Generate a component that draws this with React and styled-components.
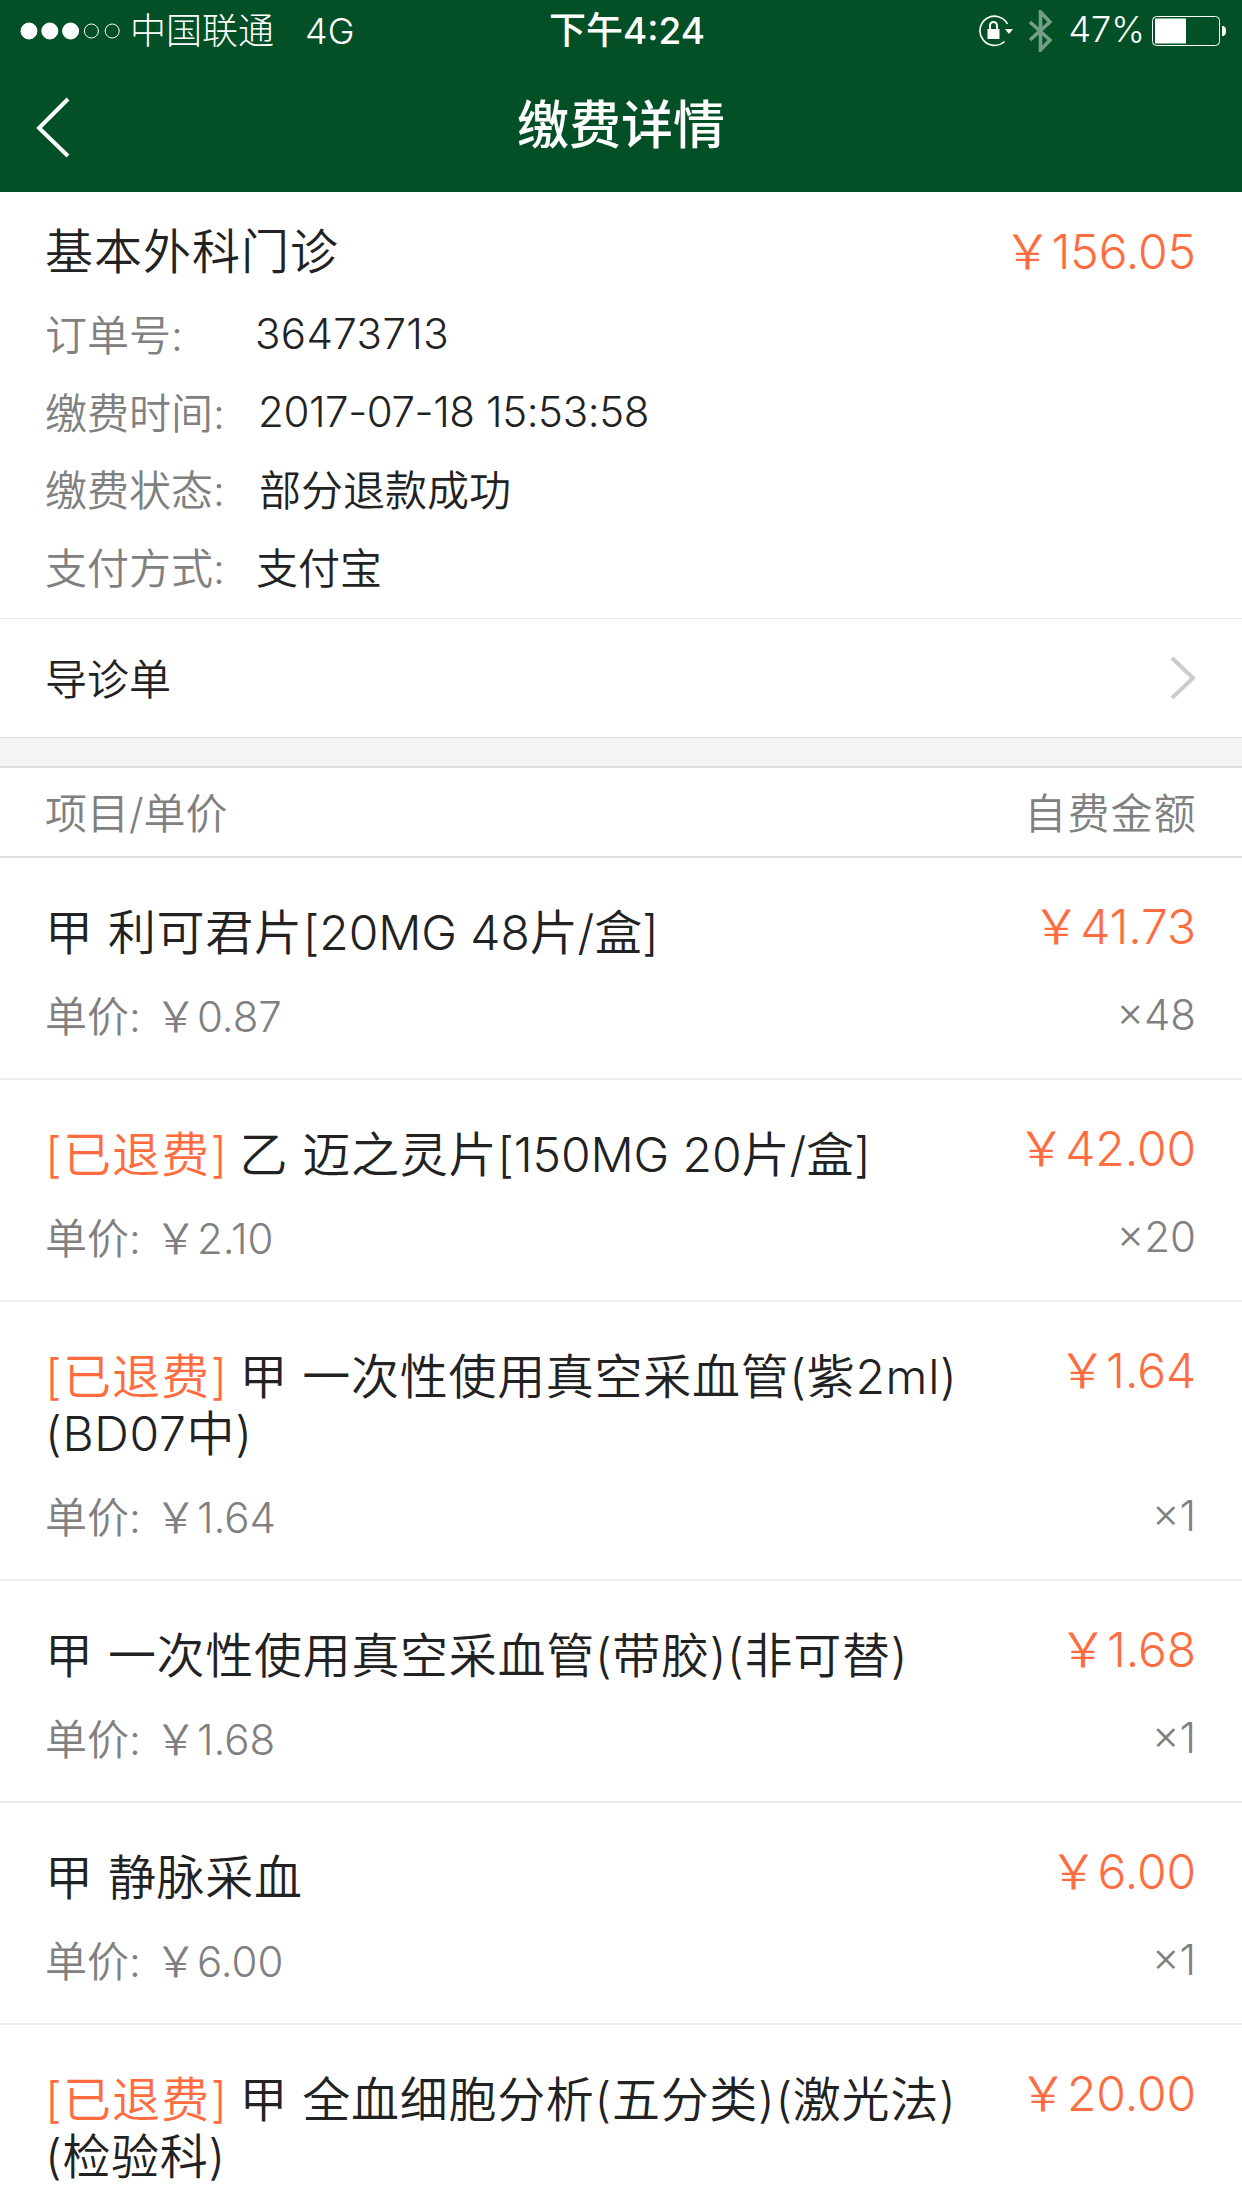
import React from 'react';
import styled, { createGlobalStyle } from 'styled-components';

const Global = createGlobalStyle`
  *, *::before, *::after { box-sizing: border-box; }
  html, body { margin: 0; padding: 0; background: #fff; }
  body { font-family: Inter, "Noto Sans CJK SC", sans-serif; }
  #root { width: 1242px; height: 2208px; overflow: hidden; }
`;
const Page = styled.div`width: 1242px; height: 2208px; overflow: hidden; background: #fff;`;
const Header = styled.header`background: #034f26; height: 192px; color: #fff; display: flex; flex-direction: column;`;
const Status = styled.div`height: 62px; display: grid; grid-template-columns: 1fr auto 1fr; align-items: center; padding: 0 16px 0 20px; font-size: 36px; font-weight: 300;`;
const StatusLeft = styled.div`display: flex; align-items: center; gap: 8px;`;
const Carrier = styled.span`font-weight: 300; white-space: pre; margin-bottom: 6px;`;
const Network = styled.span`margin-left: 31px;`;
const Clock = styled.div`font-size: 37px; font-weight: 500; margin: 0 0 6px 8px;`;
const StatusRight = styled.div`display: flex; align-items: center; justify-content: flex-end; gap: 16px;`;
const BatteryGroup = styled.div`display: flex; align-items: center; gap: 7px;`;
const Percent = styled.span`margin-bottom: 4px;`;
const Nav = styled.div`flex: 1; position: relative; display: flex; align-items: center; justify-content: center; padding-bottom: 2px;`;
const NavTitle = styled.h1`margin: 0; font-size: 52px; font-weight: 500; line-height: 1;`;
const Back = styled.svg`position: absolute; left: 35px; top: 33px;`;

const Summary = styled.section`padding: 14px 46px 0 45px; height: 426px;`;
const SummaryTop = styled.div`display: flex; justify-content: space-between; align-items: center; height: 84px; margin-bottom: 4px;`;
const Title = styled.div`font-size: 48px; font-weight: 350; color: #222; letter-spacing: 1px;`;
const Amount = styled.div`font-size: 48px; font-weight: 350; color: #ff6c40; white-space: nowrap; letter-spacing: -.1px;`;
const Info = styled.div`display: flex; align-items: center; height: 77.5px; font-size: 42px; font-weight: 350;`;
const InfoLabel = styled.span`color: #808080; width: ${p => p.$w}px; flex: none;`;
const InfoValue = styled.span`color: #222; letter-spacing: ${p => p.$ls || 0}px; margin-top: ${p => p.$top || 0}px;`;

const LinkRow = styled.div`height: 120px; border-top: 1px solid #e6e6e6; border-bottom: 1px solid #ddd; padding: 0 46px 4px 45px; display: flex; align-items: center; justify-content: space-between; font-size: 42px; font-weight: 350; color: #222;`;
const LinkArrow = styled.svg`margin-top: 4px;`;
const Gap = styled.div`height: 28px; background: #f4f4f4;`;
const TableHead = styled.div`height: 92px; border-top: 2px solid #dedede; border-bottom: 2px solid #dedede; padding: 0 46px 4px 45px; display: flex; align-items: center; justify-content: space-between; font-size: 42px; font-weight: 350; color: #808080;`;
const HeadRight = styled.span`letter-spacing: 1.2px; margin-right: -1px;`;

const Row = styled.div`border-bottom: 2px solid #eee; padding: 46px 46px 0 45px; display: flex; flex-direction: column; height: ${p => p.$two ? 279 : 222.1}px;`;
const RowTop = styled.div`display: flex; justify-content: space-between; gap: 40px;`;
const Name = styled.div`font-size: 48px; font-weight: 350; color: #222; line-height: 57px; flex: 1; letter-spacing: .7px;`;
const Refund = styled.span`color: #ff6c40; letter-spacing: 1.2px; margin-right: 11px;`;
const Spec = styled.span`letter-spacing: -.1px;`;
const RowAmount = styled(Amount)`line-height: 57px; margin-top: -6px;`;
const RowBottom = styled.div`display: flex; justify-content: space-between; align-items: center; margin-top: 27px; font-size: 42px; font-weight: 350; color: #808080; line-height: 57px;`;
const UnitLabel = styled.span`margin-right: 14px;`;
const Qty = styled.span`margin-top: -4px;`;

const items = [
  { name: '甲 利可君片', spec: '[20MG 48片/盒]', amount: '41.73', unit: '0.87', qty: 48 },
  { refund: true, name: '乙 迈之灵片', spec: '[150MG 20片/盒]', amount: '42.00', unit: '2.10', qty: 20 },
  { refund: true, two: true, name: '甲 一次性使用真空采血管(紫2ml)(BD07中)', amount: '1.64', unit: '1.64', qty: 1 },
  { name: '甲 一次性使用真空采血管(带胶)(非可替)', amount: '1.68', unit: '1.68', qty: 1 },
  { name: '甲 静脉采血', amount: '6.00', unit: '6.00', qty: 1 },
  { refund: true, two: true, name: '甲 全血细胞分析(五分类)(激光法)(检验科)', amount: '20.00', unit: '20.00', qty: 1 },
];

const Dots = () => (
  <svg width="102" height="20" viewBox="0 0 102 20">
    {[0, 1, 2, 3, 4].map(i => (
      <circle key={i} cx={9 + i * 20.8} cy="10" r={i < 3 ? 8 : 7} fill={i < 3 ? '#fff' : 'none'} stroke="#fff" strokeWidth="1" />
    ))}
  </svg>
);
const LockIcon = () => (
  <svg width="34" height="32" viewBox="0 0 34 32" fill="none">
    <path d="M25.5 26.5A14.6 14.6 0 1 1 28.5 9" stroke="#fff" strokeWidth="1.6" />
    <path d="M26 14h8l-4 5z" fill="#fff" />
    <rect x="8.5" y="14" width="12" height="10" fill="#fff" />
    <path d="M11 14v-3.5a3.5 3.5 0 0 1 7 0V14" stroke="#fff" strokeWidth="2" />
  </svg>
);
const Bluetooth = () => (
  <svg width="23" height="42" viewBox="0 0 23 42" fill="none">
    <path d="M1 12 21 30 11.5 40V2L21 12 1 30" stroke="#fff" strokeOpacity=".45" strokeWidth="3.6" />
  </svg>
);
const Battery = () => (
  <svg width="74" height="30" viewBox="0 0 74 30">
    <rect x=".5" y=".5" width="67" height="29" rx="4" fill="none" stroke="#fff" />
    <rect x="3" y="2.5" width="31" height="25" fill="#fff" />
    <path d="M70 10c3 0 4 2 4 5s-1 5-4 5z" fill="#fff" />
  </svg>
);

export default function App() {
  return (
    <Page>
      <Global />
      <Header>
        <Status>
          <StatusLeft>
            <Dots />
            <Carrier>中国联通<Network>4G</Network></Carrier>
          </StatusLeft>
          <Clock>下午4:24</Clock>
          <StatusRight>
            <LockIcon />
            <Bluetooth />
            <BatteryGroup>
              <Percent>47%</Percent>
              <Battery />
            </BatteryGroup>
          </StatusRight>
        </Status>
        <Nav>
          <Back width="36" height="64" viewBox="0 0 36 64" fill="none">
            <path d="M33 4 4 33l29 28" stroke="#fff" strokeWidth="4" />
          </Back>
          <NavTitle>缴费详情</NavTitle>
        </Nav>
      </Header>
      <Summary>
        <SummaryTop>
          <Title>基本外科门诊</Title>
          <Amount>￥156.05</Amount>
        </SummaryTop>
        <Info><InfoLabel $w={210}>订单号:</InfoLabel><InfoValue $top={2} $ls={.4}>36473713</InfoValue></Info>
        <Info><InfoLabel $w={213}>缴费时间:</InfoLabel><InfoValue $top={2} $ls={-.4}>2017-07-18 15:53:58</InfoValue></Info>
        <Info><InfoLabel $w={214}>缴费状态:</InfoLabel><InfoValue>部分退款成功</InfoValue></Info>
        <Info><InfoLabel $w={211}>支付方式:</InfoLabel><InfoValue>支付宝</InfoValue></Info>
      </Summary>
      <LinkRow>
        导诊单
        <LinkArrow width="26" height="44" viewBox="0 0 26 44" fill="none">
          <path d="M2 2l21 20L2 42" stroke="#ccc" strokeWidth="4" />
        </LinkArrow>
      </LinkRow>
      <Gap />
      <TableHead><span>项目/单价</span><HeadRight>自费金额</HeadRight></TableHead>
      {items.map(it => (
        <Row key={it.name} $two={it.two}>
          <RowTop>
            <Name>{it.refund && <Refund>[已退费]</Refund>}{it.name}{it.spec && <Spec>{it.spec}</Spec>}</Name>
            <RowAmount>￥{it.amount}</RowAmount>
          </RowTop>
          <RowBottom><span><UnitLabel>单价:</UnitLabel>￥{it.unit}</span><Qty>×{it.qty}</Qty></RowBottom>
        </Row>
      ))}
    </Page>
  );
}
